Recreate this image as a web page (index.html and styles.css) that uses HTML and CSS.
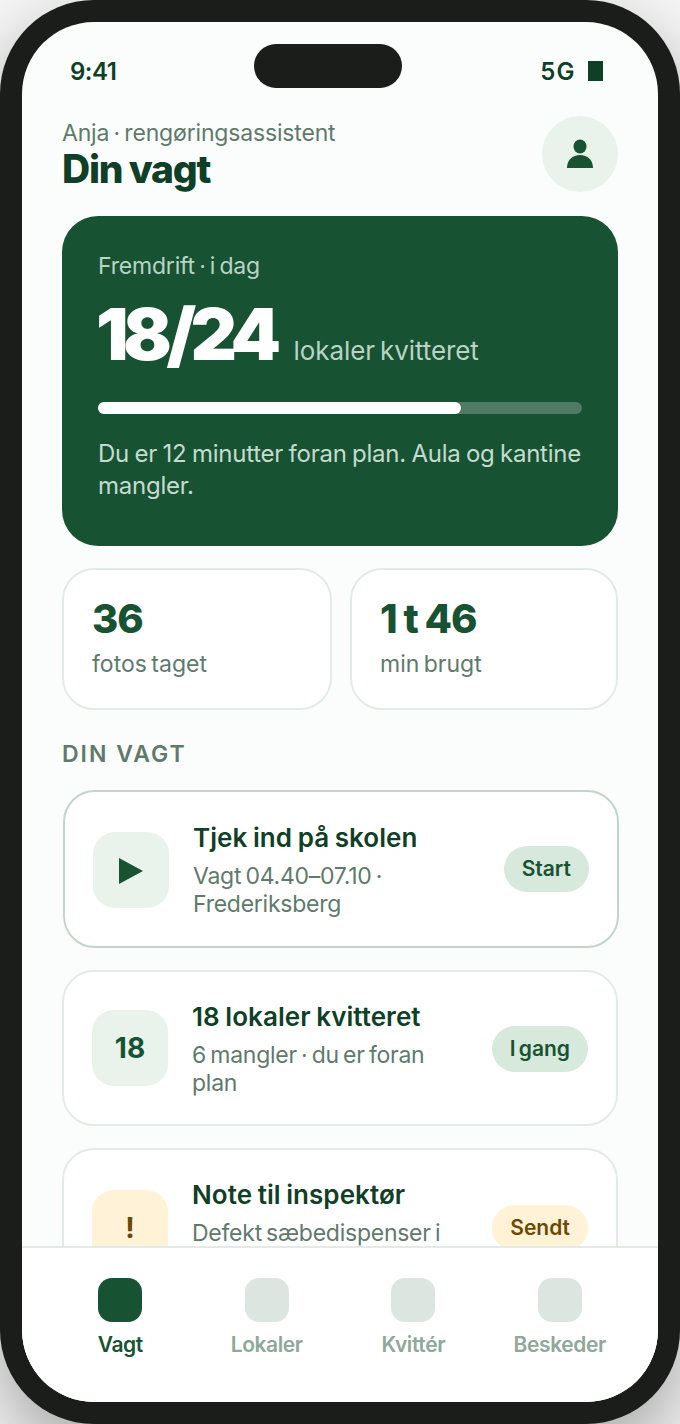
FILE: index.html
```html
<!DOCTYPE html>
<html lang="da">
<head>
    <meta charset="UTF-8">
    <meta name="viewport" content="width=device-width, initial-scale=1.0">
    <title>Din vagt</title>
    <link rel="stylesheet" href="styles.css">
</head>
<body>
    <div class="phone">
        <div class="screen">
            <div class="statusbar">
                <span class="time">9:41</span>
                <span class="island"></span>
                <span class="signal">5G <i class="battery"></i></span>
            </div>

            <div class="content">
                <header class="top">
                    <div>
                        <div class="eyebrow">Anja · rengøringsassistent</div>
                        <h1 class="title">Din vagt</h1>
                    </div>
                    <div class="avatar">
                        <svg width="28" height="32" viewBox="0 0 28 32">
                            <ellipse cx="14" cy="8.500" rx="6.500" ry="7" fill="#175333"/>
                            <path d="M1 30c0-8 5.500-13 13-13s13 5 13 13z" fill="#175333"/>
                        </svg>
                    </div>
                </header>

                <section class="hero">
                    <div class="hero-label">Fremdrift · i dag</div>
                    <div class="hero-count">
                        <span class="hero-num">18/24</span>
                        <span class="hero-unit">lokaler kvitteret</span>
                    </div>
                    <div class="bar"><div class="bar-fill" style="width: 75%"></div></div>
                    <p class="hero-note">Du er 12 minutter foran plan. Aula og kantine mangler.</p>
                </section>

                <div class="stats">
                    <div class="stat">
                        <div class="stat-num">36</div>
                        <div class="stat-label">fotos taget</div>
                    </div>
                    <div class="stat">
                        <div class="stat-num">1 t 46</div>
                        <div class="stat-label">min brugt</div>
                    </div>
                </div>

                <div class="section-label">DIN VAGT</div>

                <div class="card card-active">
                    <div class="card-icon">
                        <svg class="play" width="24" height="26" viewBox="0 0 24 26"><path d="M0 0l24 13L0 26z" fill="#175333"/></svg>
                    </div>
                    <div class="card-body">
                        <div class="card-title">Tjek ind på skolen</div>
                        <div class="card-sub">Vagt 04.40–07.10 · Frederiksberg</div>
                    </div>
                    <span class="pill">Start</span>
                </div>

                <div class="card">
                    <div class="card-icon">18</div>
                    <div class="card-body">
                        <div class="card-title">18 lokaler kvitteret</div>
                        <div class="card-sub">6 mangler · du er foran plan</div>
                    </div>
                    <span class="pill">I gang</span>
                </div>

                <div class="card card-note">
                    <div class="card-icon icon-warn">!</div>
                    <div class="card-body">
                        <div class="card-title">Note til inspektør</div>
                        <div class="card-sub">Defekt sæbedispenser i kantinens køkken</div>
                    </div>
                    <span class="pill pill-warn">Sendt</span>
                </div>
            </div>

            <nav class="tabbar">
                <div class="tab tab-active"><span class="tab-icon"></span>Vagt</div>
                <div class="tab"><span class="tab-icon"></span>Lokaler</div>
                <div class="tab"><span class="tab-icon"></span>Kvittér</div>
                <div class="tab"><span class="tab-icon"></span>Beskeder</div>
            </nav>
        </div>
    </div>
</body>
</html>
```

FILE: styles.css
```css
* {
    box-sizing: border-box;
}

html, body {
    margin: 0;
    height: 1424px;
    overflow: hidden;
}

body {
    background-color: #f6f7f6;
    font-family: Inter, "Liberation Sans", sans-serif;
    color: #0f3f26;
}

.phone {
    width: 680px;
    height: 1424px;
    padding: 22px;
    background-color: #1b1d1a;
    border-radius: 94px;
    box-shadow: 0 30px 80px rgba(0, 0, 0, 0.35);
}

.screen {
    display: flex;
    flex-direction: column;
    height: 1380px;
    background-color: #fbfdfc;
    border-radius: 72px;
    overflow: hidden;
}

.statusbar {
    display: flex;
    justify-content: space-between;
    align-items: center;
    flex: none;
    height: 66px;
    margin-top: 22px;
    padding: 0 55px 12px 48px;
    position: relative;
    font-size: 24px;
    font-weight: 600;
    letter-spacing: -0.5px;
}

.island {
    position: absolute;
    left: 232px;
    top: 0;
    width: 148px;
    height: 44px;
    background-color: #1b1d1a;
    border-radius: 22px;
}

.signal {
    display: flex;
    align-items: center;
    gap: 12px;
    letter-spacing: 1.4px;
}

.battery {
    width: 15px;
    height: 20px;
    background-color: #0f3f26;
}

.content {
    flex: 1;
    min-height: 0;
    overflow: hidden;
    padding: 6px 40px 0;
}

.top {
    display: flex;
    justify-content: space-between;
    align-items: center;
}

.eyebrow {
    font-size: 23px;
    line-height: 30px;
    letter-spacing: -0.17px;
    word-spacing: -2px;
    color: #5f7a6c;
}

.title {
    margin: -1px 0 0;
    font-size: 39px;
    line-height: 44px;
    font-weight: 800;
    letter-spacing: -1.2px;
    word-spacing: -1px;
}

.avatar {
    display: flex;
    justify-content: center;
    align-items: center;
    width: 76px;
    height: 76px;
    background-color: #e9f2eb;
    border-radius: 50%;
}

.hero {
    height: 330px;
    margin-top: 24px;
    padding: 36px;
    background-color: #175333;
    border-radius: 36px;
    color: #fff;
}

.hero-label {
    font-size: 23px;
    line-height: 28px;
    letter-spacing: -0.2px;
    word-spacing: -2px;
    color: #b9d3c5;
}

.hero-count {
    display: flex;
    align-items: baseline;
    gap: 18px;
    margin-top: 12px;
    margin-left: -2px;
}

.hero-num {
    font-size: 72px;
    line-height: 84px;
    font-weight: 900;
    letter-spacing: -5.5px;
}

.hero-unit {
    font-size: 26px;
    letter-spacing: -0.1px;
    word-spacing: -2px;
    color: #b9d3c5;
}

.bar {
    height: 12px;
    margin-top: 26px;
    background-color: #4f7a64;
    border-radius: 6px;
}

.bar-fill {
    height: 100%;
    background-color: #fff;
    border-radius: 6px;
}

.hero-note {
    margin: 24px 0 0;
    font-size: 24px;
    line-height: 32px;
    letter-spacing: -0.25px;
    word-spacing: -1px;
    color: #c5dbcf;
}

.stats {
    display: grid;
    grid-template-columns: 270px 268px;
    gap: 18px;
    margin-top: 22px;
}

.stat {
    height: 142px;
    padding: 27px 28px 0;
    background-color: #fff;
    border: 2px solid #e3ebe6;
    border-radius: 32px;
}

.stat-num {
    font-size: 40px;
    line-height: 44px;
    font-weight: 800;
    letter-spacing: -1px;
    word-spacing: -1px;
    color: #175333;
}

.stat-label {
    margin-top: 8px;
    font-size: 23px;
    line-height: 30px;
    letter-spacing: 0;
    word-spacing: -2px;
    color: #5f7a6c;
}

.section-label {
    margin-top: 30px;
    font-size: 23px;
    line-height: 28px;
    font-weight: 600;
    letter-spacing: 2px;
    color: #5f7a6c;
}

.card {
    display: flex;
    align-items: center;
    gap: 24px;
    height: 156px;
    margin-top: 22px;
    padding: 0 28px;
    background-color: #fff;
    border: 2px solid #e3ebe6;
    border-radius: 32px;
}

.card-active {
    height: 158px;
    margin: 22px -1px 0 1px;
    border-color: #c3d4cb;
}

.card-note {
    height: 160px;
}

.card-icon {
    display: flex;
    flex: none;
    justify-content: center;
    align-items: center;
    width: 76px;
    height: 76px;
    background-color: #e9f2eb;
    border-radius: 22px;
    font-size: 28px;
    font-weight: 700;
    color: #175333;
}

.card-active .card-icon {
    margin-top: 2px;
}

.play {
    margin-top: 2px;
}

.icon-warn {
    background-color: #fff2d6;
    color: #6b4a05;
}

.card-body {
    flex: 1;
    min-width: 0;
    padding-top: 2px;
}

.card-note .card-body {
    margin-top: -4px;
}

.card-title {
    font-size: 26px;
    line-height: 32px;
    font-weight: 600;
    letter-spacing: 0.05px;
    word-spacing: -1px;
}

.card-sub {
    margin-top: 8px;
    font-size: 23px;
    line-height: 28px;
    letter-spacing: -0.25px;
    word-spacing: -2px;
    color: #5f7a6c;
}

.pill {
    flex: none;
    margin-top: 2px;
    padding: 0 18px;
    height: 46px;
    line-height: 46px;
    background-color: #d7e8dc;
    border-radius: 23px;
    font-size: 21px;
    font-weight: 600;
    word-spacing: -2px;
    color: #175333;
}

.card-active .pill,
.card-note .pill {
    margin-top: 0;
}

.pill-warn {
    background-color: #fff2d6;
    color: #6b4a05;
}

.tabbar {
    display: flex;
    flex: none;
    height: 156px;
    padding: 30px 25px 0;
    background-color: #fff;
    border-top: 2px solid #e3ebe6;
}

.tab {
    display: flex;
    flex: 1;
    flex-direction: column;
    align-items: center;
    gap: 10px;
    font-size: 21px;
    line-height: 26px;
    font-weight: 600;
    letter-spacing: -0.4px;
    color: #8ea89a;
}

.tab-icon {
    width: 44px;
    height: 44px;
    background-color: #dce5e0;
    border-radius: 14px;
}

.tab-active {
    color: #175333;
}

.tab-active .tab-icon {
    background-color: #175333;
}
```
